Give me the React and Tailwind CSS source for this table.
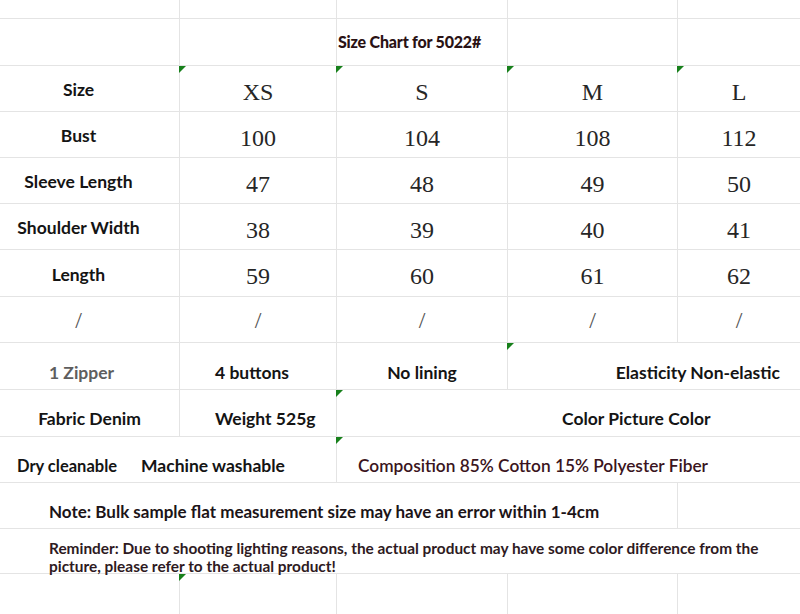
import React from 'react';

const sans = { fontFamily: 'Lato, "Open Sans", sans-serif' };
const serif = { fontFamily: '"Liberation Serif", "DejaVu Serif", serif' };

// little green corner mark that spreadsheet cells show
const Mark = () => (
  <span className="absolute -left-px top-0 h-0 w-0 border-t-[7px] border-r-[7px] border-t-[#17801b] border-r-transparent" />
);

const Row = ({ h, children, last }) => (
  <div
    className={`grid grid-cols-[180px_157px_171px_170px_1fr] ${last ? '' : 'border-b border-[#e4e4e4]'}`}
    style={{ height: h }}
  >
    {children}
  </div>
);

const Cell = ({ span = 1, line = true, mark, className = '', children }) => {
  const spans = { 1: 'col-span-1', 2: 'col-span-2', 3: 'col-span-3', 4: 'col-span-4', 5: 'col-span-5' };
  return (
    <div className={`relative flex items-center ${spans[span]} ${line ? 'border-r border-[#e4e4e4]' : ''} ${className}`}>
      {mark && <Mark />}
      {children}
    </div>
  );
};

const Label = ({ children }) => (
  <Cell className="justify-center pr-[22px] pt-[4px]">
    <span className="whitespace-nowrap text-[17.5px] font-bold text-[#141414]" style={sans}>{children}</span>
  </Cell>
);

const Num = ({ children, mark, line = true }) => (
  <Cell mark={mark} line={line} className="justify-center pt-[6px]">
    <span className="text-[24px] text-[#262626]" style={serif}>{children}</span>
  </Cell>
);

const sizes = ['XS', 'S', 'M', 'L'];
const measures = [
  ['Bust', ['100', '104', '108', '112']],
  ['Sleeve Length', ['47', '48', '49', '50']],
  ['Shoulder Width', ['38', '39', '40', '41']],
  ['Length', ['59', '60', '61', '62']],
];

const txt = 'whitespace-nowrap text-[17.5px] font-bold text-[#141414]';

export default function App() {
  return (
    <div className="h-[614px] w-[800px] overflow-hidden bg-white">
      <Row h={19}>
        <Cell /><Cell /><Cell /><Cell /><Cell line={false} />
      </Row>
      <Row h={47}>
        <Cell /><Cell />
        <Cell className="pl-[1px]">
          <span className="whitespace-nowrap text-[16px] font-black tracking-[-0.2px] text-[#2a1214]" style={sans}>
            Size Chart for 5022#
          </span>
        </Cell>
        <Cell /><Cell line={false} />
      </Row>
      <Row h={46}>
        <Label>Size</Label>
        {sizes.map((s, i) => (
          <Num key={s} mark line={i < 3}>{s}</Num>
        ))}
      </Row>
      {measures.map(([name, vals]) => (
        <Row key={name} h={name === 'Length' ? 47 : 46}>
          <Label>{name}</Label>
          {vals.map((v, i) => (
            <Num key={i} line={i < 3}>{v}</Num>
          ))}
        </Row>
      ))}
      <Row h={46}>
        {[0, 1, 2, 3, 4].map((i) => (
          <Cell key={i} line={i < 4} className={`justify-center ${i === 0 ? 'pr-[22px]' : ''}`}>
            <span className="text-[24px] text-[#555]" style={serif}>/</span>
          </Cell>
        ))}
      </Row>
      <Row h={47}>
        <Cell className="justify-center pr-[16px] pt-[14px]">
          <span className="whitespace-nowrap text-[17.5px] font-bold text-[#5e5e5e]" style={sans}>1 Zipper</span>
        </Cell>
        <Cell className="pl-[35px] pt-[14px]">
          <span className={txt} style={sans}>4 buttons</span>
        </Cell>
        <Cell className="justify-center pt-[14px]">
          <span className={txt} style={sans}>No lining</span>
        </Cell>
        <Cell span={2} line={false} mark className="justify-end pr-[20px] pt-[14px]">
          <span className={txt} style={sans}>Elasticity Non-elastic</span>
        </Cell>
      </Row>
      <Row h={47}>
        <Cell className="justify-center pt-[13px]">
          <span className={txt} style={sans}>Fabric Denim</span>
        </Cell>
        <Cell className="pl-[35px] pt-[13px]">
          <span className={txt} style={sans}>Weight 525g</span>
        </Cell>
        <Cell span={3} line={false} mark className="pl-[225px] pt-[13px]">
          <span className={txt} style={sans}>Color Picture Color</span>
        </Cell>
      </Row>
      <Row h={46}>
        <Cell span={2} className="pl-[17px] pt-[13px]">
          <span className="w-[124px] whitespace-nowrap text-[16.5px] font-bold text-[#141414]" style={sans}>Dry cleanable</span>
          <span className={txt} style={sans}>Machine washable</span>
        </Cell>
        <Cell span={3} line={false} mark className="pl-[21px] pt-[13px]">
          <span className="whitespace-nowrap text-[17.3px] font-semibold text-[#3a1420]" style={sans}>
            Composition 85% Cotton 15% Polyester Fiber
          </span>
        </Cell>
      </Row>
      <Row h={46}>
        <Cell span={4} className="pl-[49px] pt-[13px]">
          <span className="whitespace-nowrap text-[17px] font-bold text-[#1c1418]" style={sans}>
            Note: Bulk sample flat measurement size may have an error within 1-4cm
          </span>
        </Cell>
        <Cell line={false} />
      </Row>
      <Row h={45}>
        <Cell span={5} line={false} className="pl-[49px] pr-[30px] pt-[10px]">
          <p className="text-[15.4px] font-bold leading-[18px] text-[#2e1a22]" style={sans}>
            Reminder: Due to shooting lighting reasons, the actual product may have some color difference from the
            picture, please refer to the actual product!
          </p>
        </Cell>
      </Row>
      <Row h={41} last>
        <Cell /><Cell mark /><Cell /><Cell /><Cell line={false} />
      </Row>
    </div>
  );
}
